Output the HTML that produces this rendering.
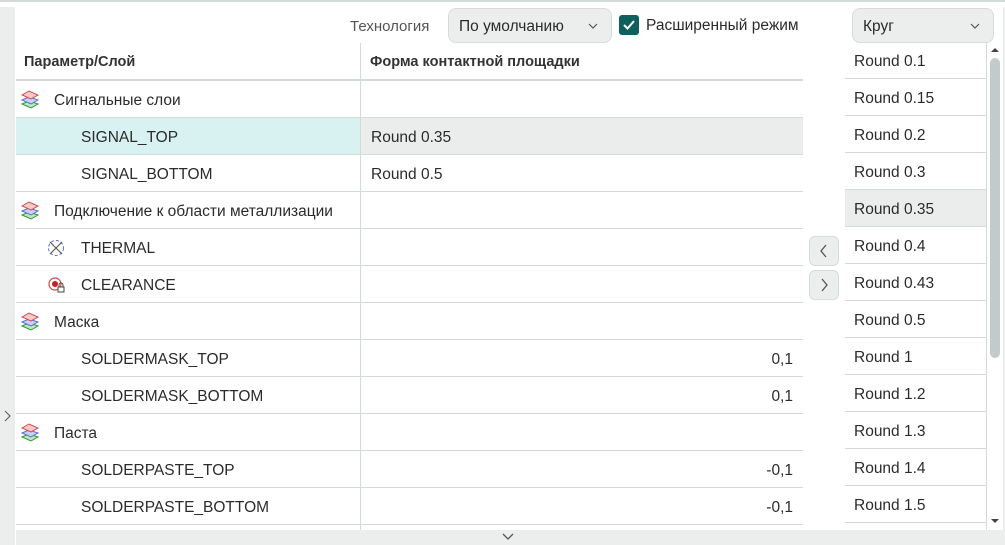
<!DOCTYPE html>
<html><head><meta charset="utf-8"><style>
*{box-sizing:border-box;margin:0;padding:0}
body{width:1005px;height:545px;overflow:hidden;background:#fff;font-family:"Liberation Sans",sans-serif;color:#2b2b2b;font-size:15.5px;position:relative}
.abs{position:absolute}
.row{position:absolute;left:16px;width:787px;height:37px;border-bottom:1px solid #d3dad8}
.row span{position:absolute;top:11px}
.rl{position:absolute;left:845px;width:142px;height:37px;border-bottom:1px solid #d3dad8}
.rl span{position:absolute;left:9px;top:11px}
.sel{background:#ebecec}
.btn{position:absolute;left:809px;width:30px;height:30px;border:1px solid #d6dcdb;border-radius:6px;background:#eceeed}
.dd{position:absolute;height:35px;border:1px solid #d6dcdb;border-radius:8px;background:#eceeed}
</style></head><body>
<div class="abs" style="left:0;top:0;width:1005px;height:2px;background:#d3dad8"></div>
<div class="abs" style="left:0;top:7px;width:15px;height:538px;background:#eceeed"></div>
<svg class="abs" style="left:3px;top:409px" width="9" height="14"><path d="M2 2l5 5-5 5" fill="none" stroke="#666" stroke-width="1.2"/></svg>
<div class="abs" style="left:16px;top:530px;width:989px;height:15px;background:#eceeed"></div>
<svg class="abs" style="left:501px;top:532px" width="14" height="10"><path d="M2 2l5 5 5-5" fill="none" stroke="#555" stroke-width="1.3"/></svg>

<div class="abs" style="left:350px;top:18px;color:#555;font-size:15px">Технология</div>
<div class="dd" style="left:448px;top:8px;width:164px"><span class="abs" style="left:10px;top:9px">По умолчанию</span>
<svg class="abs" style="left:138px;top:13px" width="12" height="8"><path d="M2 2l4 4 4-4" fill="none" stroke="#555" stroke-width="1.2"/></svg></div>
<div class="abs" style="left:619px;top:15px;width:20px;height:20px;border-radius:3px;background:#0f5f5c"></div>
<svg class="abs" style="left:619px;top:15px" width="20" height="20"><path d="M5 10l3.5 3.5L15 6" fill="none" stroke="#fff" stroke-width="2"/></svg>
<div class="abs" style="left:646px;top:17px">Расширенный режим</div>
<div class="dd" style="left:852px;top:8px;width:142px"><span class="abs" style="left:10px;top:9px">Круг</span>
<svg class="abs" style="left:116px;top:13px" width="12" height="8"><path d="M2 2l4 4 4-4" fill="none" stroke="#555" stroke-width="1.2"/></svg></div>

<div class="abs" style="left:16px;top:79px;width:787px;height:2px;background:#d3dad8"></div>
<div class="abs" style="left:24px;top:54px;font-weight:bold;color:#333;font-size:14.5px">Параметр/Слой</div>
<div class="abs" style="left:370px;top:54px;font-weight:bold;color:#333;font-size:14.5px">Форма контактной площадки</div>

<div class="row" style="top:81px"><span style="left:38px">Сигнальные слои</span></div>
<div class="row" style="top:118px;background:#d8f2f1"><span style="left:65px">SIGNAL_TOP</span><div class="abs sel" style="left:345px;top:0;width:442px;height:36px"></div><span style="left:355px">Round 0.35</span></div>
<div class="row" style="top:155px"><span style="left:65px">SIGNAL_BOTTOM</span><span style="left:355px">Round 0.5</span></div>
<div class="row" style="top:192px"><span style="left:38px">Подключение к области металлизации</span></div>
<div class="row" style="top:229px"><span style="left:65px">THERMAL</span></div>
<div class="row" style="top:266px"><span style="left:65px">CLEARANCE</span></div>
<div class="row" style="top:303px"><span style="left:38px">Маска</span></div>
<div class="row" style="top:340px"><span style="left:65px">SOLDERMASK_TOP</span><span style="right:10px">0,1</span></div>
<div class="row" style="top:377px"><span style="left:65px">SOLDERMASK_BOTTOM</span><span style="right:10px">0,1</span></div>
<div class="row" style="top:414px"><span style="left:38px">Паста</span></div>
<div class="row" style="top:451px"><span style="left:65px">SOLDERPASTE_TOP</span><span style="right:10px">-0,1</span></div>
<div class="row" style="top:488px"><span style="left:65px">SOLDERPASTE_BOTTOM</span><span style="right:10px">-0,1</span></div>
<div class="abs" style="left:360px;top:43px;width:1px;height:487px;background:#d3dad8"></div>

<svg class="abs" style="left:20px;top:89px" width="22" height="22"><g stroke-width="1"><path d="M2 15l7-3 9 3-7 4z" fill="#bfe6bf" stroke="#2a9a2a"/><path d="M2 11l7-3 9 3-7 4z" fill="#c8d0f5" stroke="#5a6fd6"/><path d="M2 6l7-4 9 4-7 4z" fill="#f7c9c9" stroke="#d04848"/></g></svg>
<svg class="abs" style="left:20px;top:200px" width="22" height="22"><g stroke-width="1"><path d="M2 15l7-3 9 3-7 4z" fill="#bfe6bf" stroke="#2a9a2a"/><path d="M2 11l7-3 9 3-7 4z" fill="#c8d0f5" stroke="#5a6fd6"/><path d="M2 6l7-4 9 4-7 4z" fill="#f7c9c9" stroke="#d04848"/></g></svg>
<svg class="abs" style="left:20px;top:311px" width="22" height="22"><g stroke-width="1"><path d="M2 15l7-3 9 3-7 4z" fill="#bfe6bf" stroke="#2a9a2a"/><path d="M2 11l7-3 9 3-7 4z" fill="#c8d0f5" stroke="#5a6fd6"/><path d="M2 6l7-4 9 4-7 4z" fill="#f7c9c9" stroke="#d04848"/></g></svg>
<svg class="abs" style="left:20px;top:422px" width="22" height="22"><g stroke-width="1"><path d="M2 15l7-3 9 3-7 4z" fill="#bfe6bf" stroke="#2a9a2a"/><path d="M2 11l7-3 9 3-7 4z" fill="#c8d0f5" stroke="#5a6fd6"/><path d="M2 6l7-4 9 4-7 4z" fill="#f7c9c9" stroke="#d04848"/></g></svg>
<svg class="abs" style="left:47px;top:238px" width="20" height="20"><circle cx="9" cy="10" r="7.5" fill="none" stroke="#5a6fd6" stroke-dasharray="3 2"/><path d="M3 4l12 12M15 4L3 16" stroke="#555" stroke-width="1.1"/></svg>
<svg class="abs" style="left:47px;top:275px" width="20" height="20"><circle cx="8" cy="9" r="6" fill="none" stroke="#d04848" stroke-width="1.2"/><circle cx="8" cy="9" r="3" fill="#c82020"/><rect x="11" y="12" width="6" height="5" fill="#fff" stroke="#444"/><path d="M12 12v-2a2 2 0 014 0v2" fill="none" stroke="#444"/></svg>

<div class="btn" style="top:236px"><svg width="28" height="28"><path d="M16 8l-5 6 5 6" fill="none" stroke="#555" stroke-width="1.3"/></svg></div>
<div class="btn" style="top:270px"><svg width="28" height="28"><path d="M12 8l5 6-5 6" fill="none" stroke="#555" stroke-width="1.3"/></svg></div>

<div class="rl" style="top:42px"><span>Round 0.1</span></div>
<div class="rl" style="top:79px"><span>Round 0.15</span></div>
<div class="rl" style="top:116px"><span>Round 0.2</span></div>
<div class="rl" style="top:153px"><span>Round 0.3</span></div>
<div class="rl sel" style="top:190px"><span>Round 0.35</span></div>
<div class="rl" style="top:227px"><span>Round 0.4</span></div>
<div class="rl" style="top:264px"><span>Round 0.43</span></div>
<div class="rl" style="top:301px"><span>Round 0.5</span></div>
<div class="rl" style="top:338px"><span>Round 1</span></div>
<div class="rl" style="top:375px"><span>Round 1.2</span></div>
<div class="rl" style="top:412px"><span>Round 1.3</span></div>
<div class="rl" style="top:449px"><span>Round 1.4</span></div>
<div class="rl" style="top:486px"><span>Round 1.5</span></div>
<div class="abs" style="left:986px;top:43px;width:1px;height:487px;background:#d3dad8"></div>
<div class="abs" style="left:1003px;top:7px;width:2px;height:523px;background:#eceeed"></div>
<svg class="abs" style="left:989px;top:46px" width="12" height="8"><path d="M2 6l4-4 4 4z" fill="#444"/></svg>
<svg class="abs" style="left:989px;top:517px" width="12" height="8"><path d="M2 2l4 4 4-4z" fill="#444"/></svg>
<div class="abs" style="left:990px;top:58px;width:10px;height:300px;border-radius:5px;background:#c2cbc9"></div>
</body></html>
